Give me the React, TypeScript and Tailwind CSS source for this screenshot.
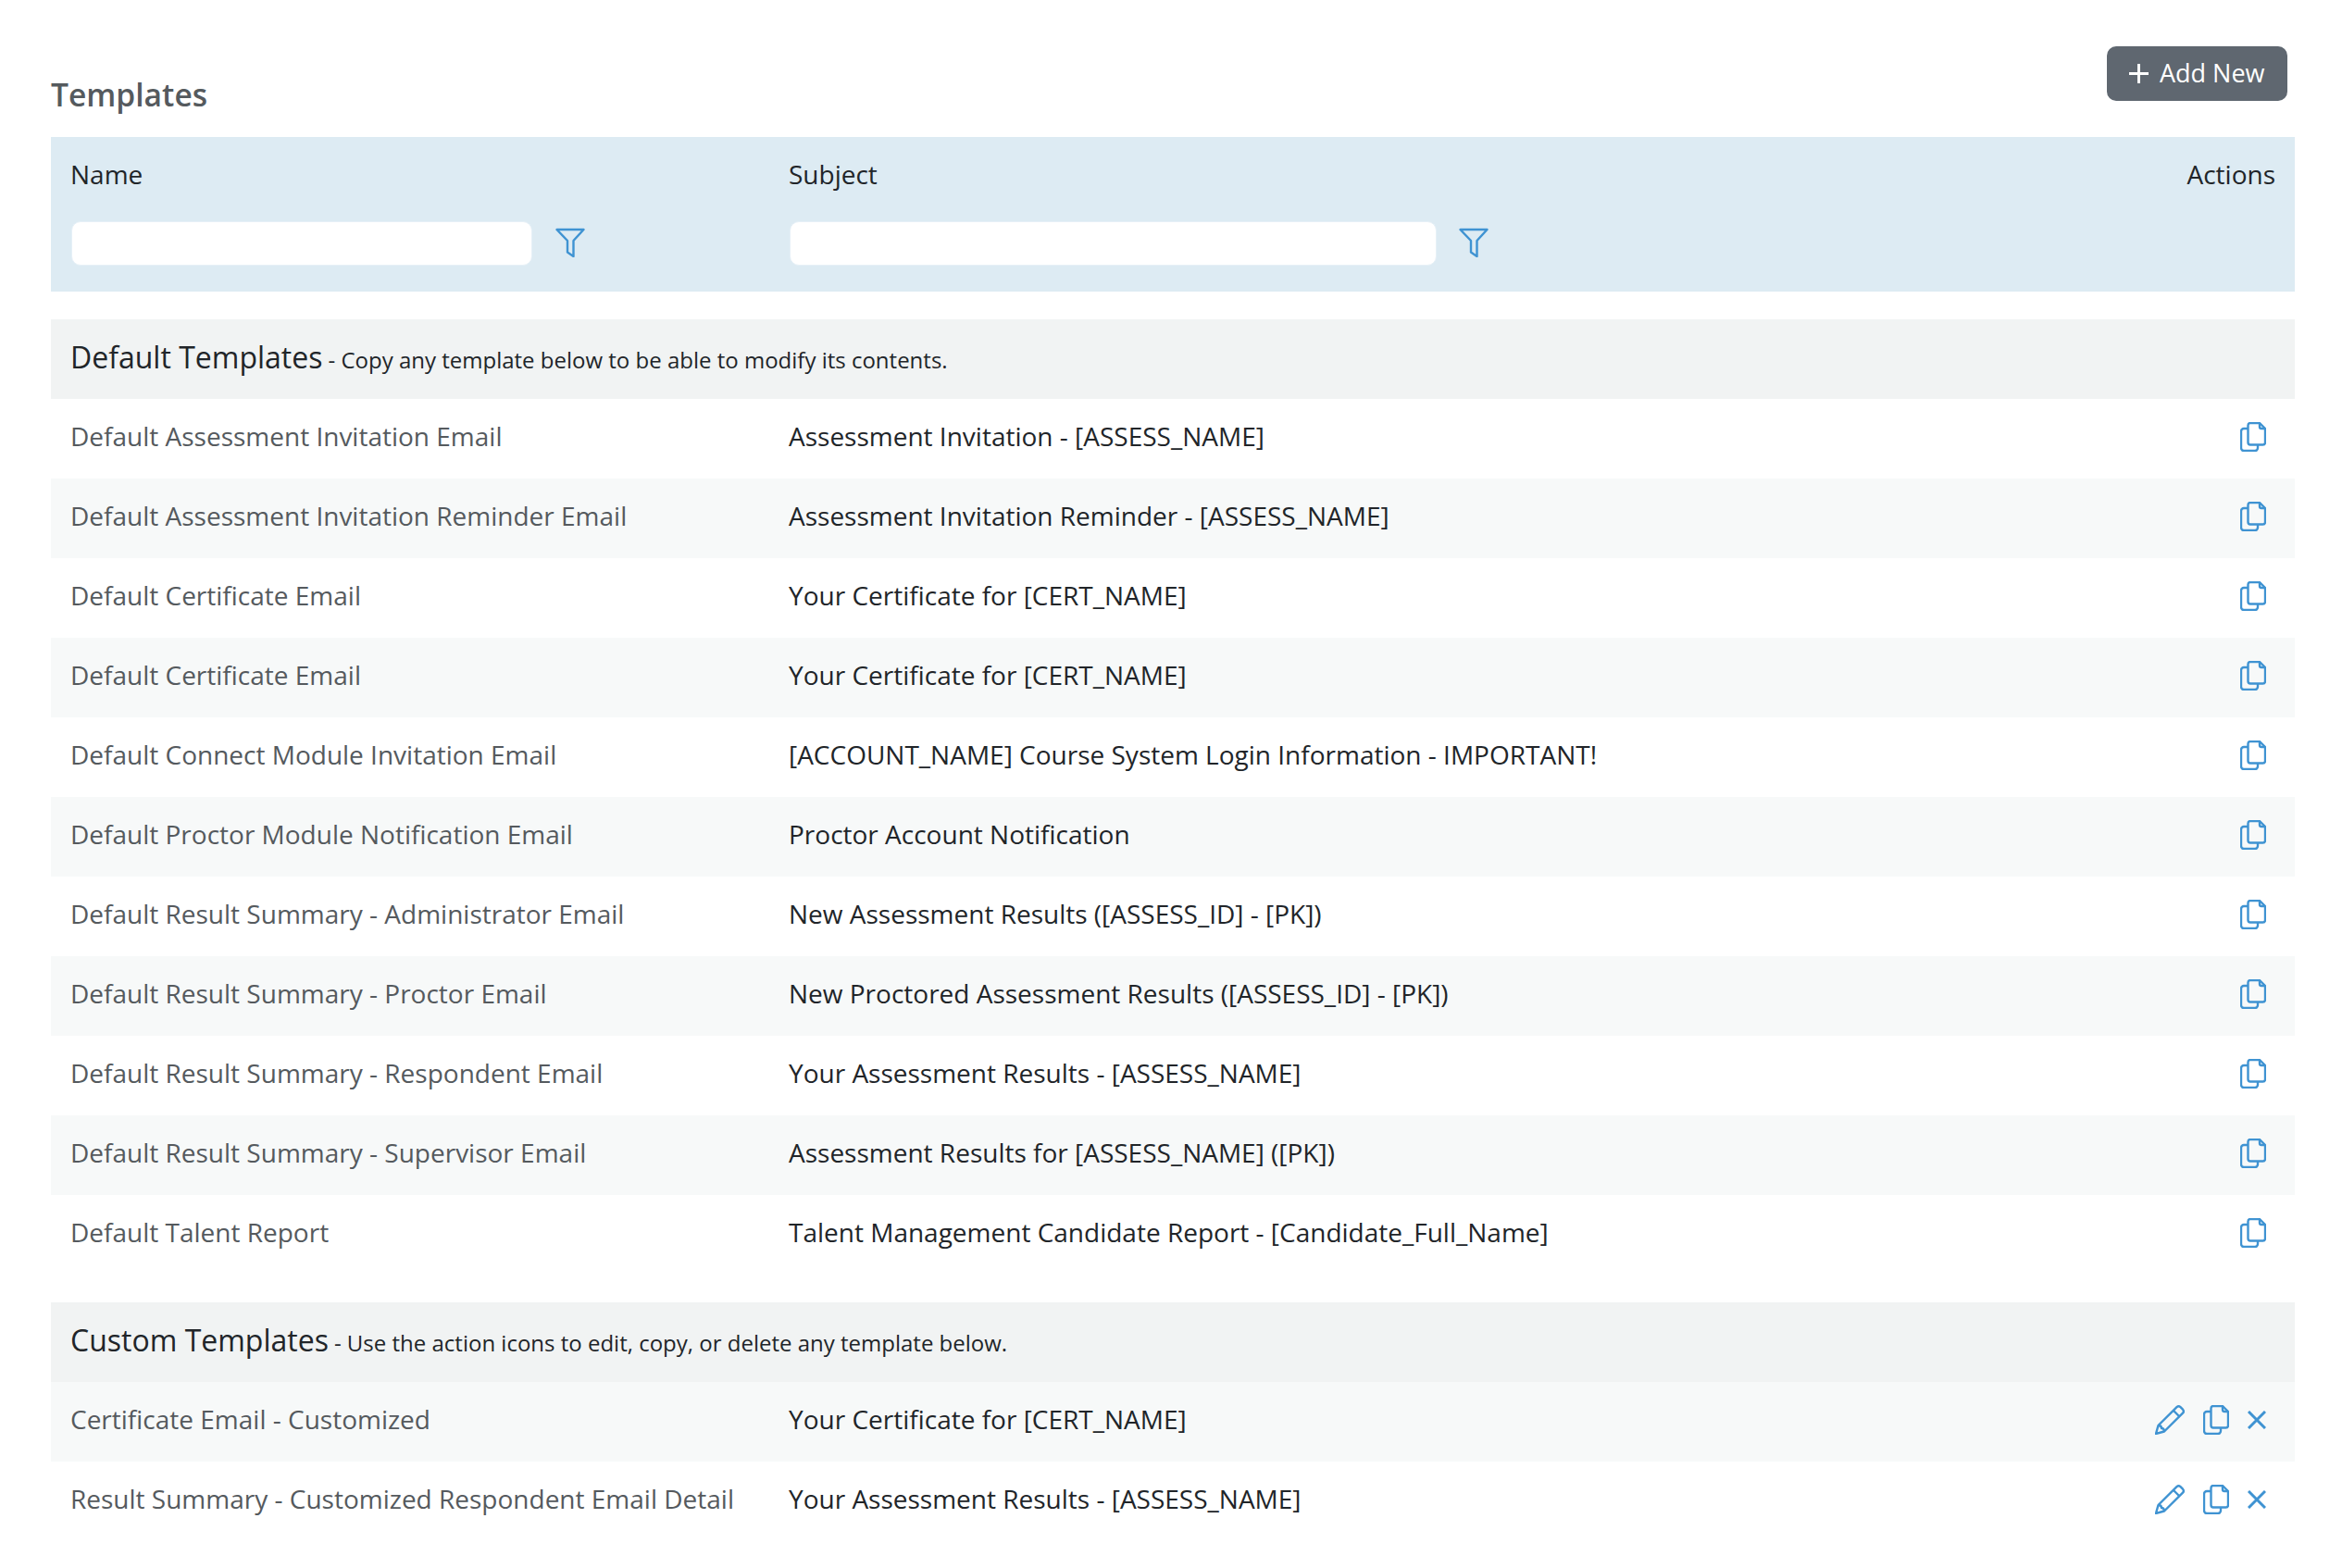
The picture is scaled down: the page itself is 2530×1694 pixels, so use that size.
const defaults = [
  ["Default Assessment Invitation Email", "Assessment Invitation - [ASSESS_NAME]"],
  ["Default Assessment Invitation Reminder Email", "Assessment Invitation Reminder - [ASSESS_NAME]"],
  ["Default Certificate Email", "Your Certificate for [CERT_NAME]"],
  ["Default Certificate Email", "Your Certificate for [CERT_NAME]"],
  ["Default Connect Module Invitation Email", "[ACCOUNT_NAME] Course System Login Information - IMPORTANT!"],
  ["Default Proctor Module Notification Email", "Proctor Account Notification"],
  ["Default Result Summary - Administrator Email", "New Assessment Results ([ASSESS_ID] - [PK])"],
  ["Default Result Summary - Proctor Email", "New Proctored Assessment Results ([ASSESS_ID] - [PK])"],
  ["Default Result Summary - Respondent Email", "Your Assessment Results - [ASSESS_NAME]"],
  ["Default Result Summary - Supervisor Email", "Assessment Results for [ASSESS_NAME] ([PK])"],
  ["Default Talent Report", "Talent Management Candidate Report - [Candidate_Full_Name]"],
];

const customs = [
  ["Certificate Email - Customized", "Your Certificate for [CERT_NAME]"],
  ["Result Summary - Customized Respondent Email Detail", "Your Assessment Results - [ASSESS_NAME]"],
];

function FilterIcon() {
  return (
    <svg width="32" height="32" viewBox="0 0 32 32" fill="none" stroke="#3f93d2" strokeWidth="2.4" strokeLinejoin="round" className="shrink-0">
      <path d="M1.500 2H30.500L19.500 14V31L13 26.500V14Z" />
    </svg>
  );
}

function CopyIcon() {
  return (
    <svg width="28" height="32" viewBox="0 0 28 32" fill="none" stroke="#3f93d2" strokeWidth="2.4" strokeLinejoin="round" className="shrink-0">
      <path d="M8 7H4a3 3 0 0 0-3 3V28a3 3 0 0 0 3 3H16a3 3 0 0 0 3-3V25" />
      <path d="M11 1H21L27 7V22a2.500 2.500 0 0 1-2.500 2.500H11a2.500 2.500 0 0 1-2.500-2.500V3.500A2.500 2.500 0 0 1 11 1Z" />
      <path d="M21 1V5a2 2 0 0 0 2 2H27" />
    </svg>
  );
}

function PencilIcon() {
  return (
    <svg width="32" height="32" viewBox="0 0 32 32" fill="none" stroke="#3f93d2" strokeWidth="2.4" strokeLinejoin="round" className="shrink-0">
      <path d="M1 31L3.500 22L23.500 2.200a3 3 0 0 1 4 0L30 4.700a3 3 0 0 1 0 4L10 28.500Z" />
      <path d="M20 6L26.500 12.500" />
      <path d="M3.500 22C6 22 7 23 7 25C9 25 10 26 10 28.500" />
    </svg>
  );
}

function CloseIcon() {
  return (
    <svg width="20" height="20" viewBox="0 0 20 20" fill="none" stroke="#3f93d2" strokeWidth="3" className="shrink-0">
      <path d="M1 1L19 19M19 1L1 19" />
    </svg>
  );
}

function Row({ name, subject, shaded, custom }: { name: string; subject: string; shaded: boolean; custom?: boolean }) {
  return (
    <div className={`flex items-center h-[86px] pl-[21px] ${shaded ? "bg-[#f7f9f9]" : "bg-white"}`}>
      <div className="w-[776px] shrink-0 text-[#555a5e] pb-[7px]">{name}</div>
      <div className="flex-1 text-[#212529] pb-[7px]">{subject}</div>
      {custom ? (
        <div className="flex items-center mr-[31px] mb-[4px]">
          <PencilIcon />
          <div className="ml-[20px]"><CopyIcon /></div>
          <div className="ml-[20px]"><CloseIcon /></div>
        </div>
      ) : (
        <div className="mr-[31px] mb-[4px]"><CopyIcon /></div>
      )}
    </div>
  );
}

function SectionHeader({ title, note }: { title: string; note: string }) {
  return (
    <div className="flex items-baseline h-[86px] pl-[21px] pt-[19px] bg-[#f1f3f3] text-[#212529]">
      <span className="text-[32px] leading-[44px]">{title}</span>
      <span className="text-[24px] ml-[6px]">{note}</span>
    </div>
  );
}

export default function App() {
  return (
    <div className="bg-white min-h-[1694px] pl-[55px] pr-[51px] pt-[50px] pb-[29px] text-[28px] font-['Open_Sans',sans-serif]">
      <div className="flex justify-between items-start h-[98px]">
        <h1 className="mt-[30px] text-[33.6px] leading-[44px] font-semibold text-[#555a5e]">Templates</h1>
        <button className="flex items-center h-[59px] w-[195px] mr-[8px] pl-[24px] rounded-[10px] bg-[#5f6770] text-white text-[27px] font-medium">
          <svg width="21" height="21" viewBox="0 0 21 21" stroke="currentColor" strokeWidth="3" className="mr-[12px] shrink-0">
            <path d="M10.500 0V21M0 10.500H21" />
          </svg>
          Add New
        </button>
      </div>

      <div className="flex h-[167px] pl-[21px] pr-[21px] bg-[#ddebf3] text-[#212529] mb-[30px]">
        <div className="w-[776px] shrink-0 pt-[20px]">
          <div className="leading-[40px]">Name</div>
          <div className="flex items-center mt-[31px] ml-[1px]">
            <input className="w-[498px] h-[48px] rounded-[10px] bg-white border border-[#e6f0f7]" />
            <div className="ml-[25px] -mt-[3px]"><FilterIcon /></div>
          </div>
        </div>
        <div className="flex-1 pt-[20px]">
          <div className="leading-[40px]">Subject</div>
          <div className="flex items-center mt-[31px] ml-[1px]">
            <input className="w-[699px] h-[48px] rounded-[10px] bg-white border border-[#e6f0f7]" />
            <div className="ml-[24px] -mt-[3px]"><FilterIcon /></div>
          </div>
        </div>
        <div className="pt-[20px] leading-[40px]">Actions</div>
      </div>

      <SectionHeader title="Default Templates" note="- Copy any template below to be able to modify its contents." />
      {defaults.map((d, i) => (
        <Row key={i} name={d[0]} subject={d[1]} shaded={i % 2 === 1} />
      ))}

      <div className="mt-[30px]">
        <SectionHeader title="Custom Templates" note="- Use the action icons to edit, copy, or delete any template below." />
        {customs.map((c, i) => (
          <Row key={i} name={c[0]} subject={c[1]} shaded={i % 2 === 0} custom />
        ))}
      </div>
    </div>
  );
}
